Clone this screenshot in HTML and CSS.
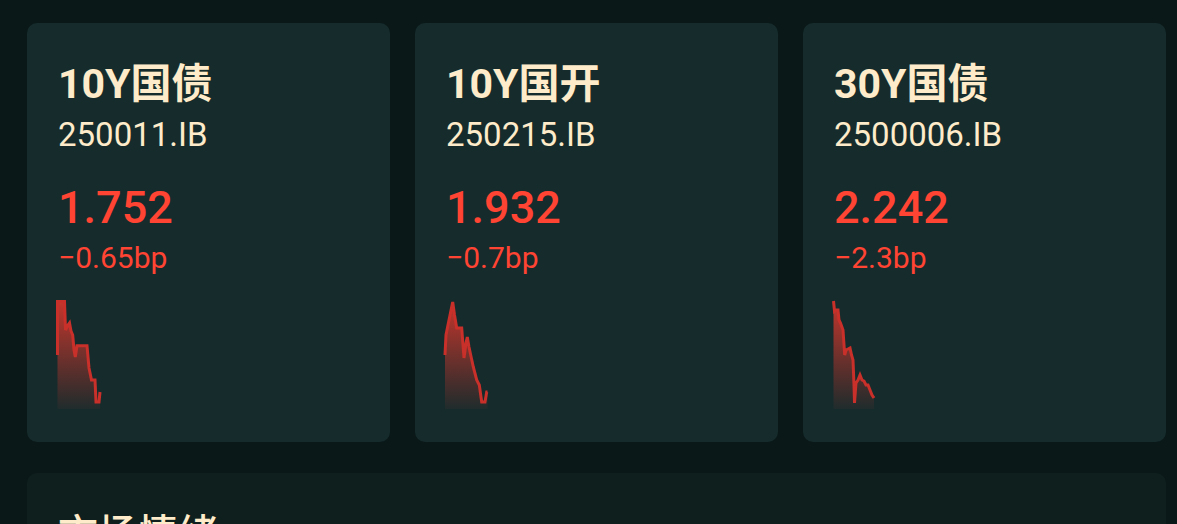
FILE: index.html
```html
<!DOCTYPE html>
<html lang="zh-CN">
<head>
<meta charset="utf-8">
<title>债券行情</title>
<link rel="stylesheet" href="styles.css">
</head>
<body>
<div class="page">
  <div class="cards">
    <div class="card">
      <div class="name">10Y国债</div>
      <div class="code">250011.IB</div>
      <div class="yield">1.752</div>
      <div class="change">−0.65bp</div>
      <svg class="spark" width="54" height="116" viewBox="0 0 54 116">
        <defs>
          <linearGradient id="g1" x1="0" y1="0" x2="0" y2="1">
            <stop offset="0" stop-color="#d8372c" stop-opacity="0.9"/>
            <stop offset="1" stop-color="#d8372c" stop-opacity="0.05"/>
          </linearGradient>
        </defs>
        <path d="M5.5 60 L5.5 6.5 L12.5 6.5 L13.5 35 L16 30 L17.5 28 L19 36 L20.7 40 L22 55 L23.3 62 L25 50.7 L35 50.7 L37 73 L39.5 85 L43 85 L44 107 L47 107 L48 97 L48 114 L5.5 114 Z" fill="url(#g1)"/>
        <path d="M5.5 60 L5.5 6.5 L12.5 6.5 L13.5 35 L16 30 L17.5 28 L19 36 L20.7 40 L22 55 L23.3 62 L25 50.7 L35 50.7 L37 73 L39.5 85 L43 85 L44 107 L47 107 L48 97" fill="none" stroke="#c9302a" stroke-width="3"/>
      </svg>
    </div>
    <div class="card">
      <div class="name">10Y国开</div>
      <div class="code">250215.IB</div>
      <div class="yield">1.932</div>
      <div class="change">−0.7bp</div>
      <svg class="spark" width="54" height="116" viewBox="0 0 54 116">
        <defs>
          <linearGradient id="g2" x1="0" y1="0" x2="0" y2="1">
            <stop offset="0" stop-color="#d8372c" stop-opacity="0.9"/>
            <stop offset="1" stop-color="#d8372c" stop-opacity="0.05"/>
          </linearGradient>
        </defs>
        <path d="M5 60 L6 40 L9 25 L12.7 7 L14.5 20 L16.7 33 L21.7 33 L23 50 L24 63 L26 48 L27.3 42 L29 52 L30.7 60 L33.3 72 L36.7 85 L39.3 90 L41.7 107 L45 107 L46.7 97 L47.5 97 L47.5 114 L5 114 Z" fill="url(#g2)"/>
        <path d="M5 60 L6 40 L9 25 L12.7 7 L14.5 20 L16.7 33 L21.7 33 L23 50 L24 63 L26 48 L27.3 42 L29 52 L30.7 60 L33.3 72 L36.7 85 L39.3 90 L41.7 107 L45 107 L46.7 97 L47.5 97" fill="none" stroke="#c9302a" stroke-width="3"/>
      </svg>
    </div>
    <div class="card">
      <div class="name">30Y国债</div>
      <div class="code">2500006.IB</div>
      <div class="yield">2.242</div>
      <div class="change">−2.3bp</div>
      <svg class="spark" width="54" height="116" viewBox="0 0 54 116">
        <defs>
          <linearGradient id="g3" x1="0" y1="0" x2="0" y2="1">
            <stop offset="0" stop-color="#d8372c" stop-opacity="0.9"/>
            <stop offset="1" stop-color="#d8372c" stop-opacity="0.05"/>
          </linearGradient>
        </defs>
        <path d="M5.5 6 L6.5 16 L7.5 15 L10 15 L11 25 L12.5 28 L15 35 L16.7 60 L18 55 L20 54 L22 53 L23.5 60 L25 65 L26 90 L26.5 108 L28 88 L30 85 L32 80 L34 85 L36 86 L38 90 L40 90 L42 95 L44 100 L46 103 L46 114 L5.5 114 Z" fill="url(#g3)"/>
        <path d="M5.5 6 L6.5 16 L7.5 15 L10 15 L11 25 L12.5 28 L15 35 L16.7 60 L18 55 L20 54 L22 53 L23.5 60 L25 65 L26 90 L26.5 108 L28 88 L30 85 L32 80 L34 85 L36 86 L38 90 L40 90 L42 95 L44 100 L46 103" fill="none" stroke="#c9302a" stroke-width="3"/>
      </svg>
    </div>
  </div>
  <div class="panel">
    <div class="panel-title">市场情绪</div>
  </div>
</div>
</body>
</html>
```
FILE: styles.css
```css
html, body {
  margin: 0;
  padding: 0;
  background: #0a1818;
  overflow: hidden;
  height: 524px;
}
body {
  font-family: Roboto, "Noto Sans CJK SC", sans-serif;
  color: #fdebc9;
}
.page {
  padding: 23px 11px 0 27px;
  display: flex;
  flex-direction: column;
  gap: 31px;
}
.cards {
  display: grid;
  grid-template-columns: repeat(3, 1fr);
  gap: 25px;
}
.card {
  background: #162b2c;
  border-radius: 10px;
  height: 419px;
  box-sizing: border-box;
  padding: 37px 32px 0 31px;
  display: flex;
  flex-direction: column;
}
.name {
  font-size: 41px;
  font-weight: 700;
  line-height: 48px;
}
.code {
  font-size: 33px;
  line-height: 44px;
  margin-top: 5px;
}
.yield {
  font-size: 45px;
  font-weight: 500;
  line-height: 56px;
  margin-top: 23px;
  color: #ff4433;
}
.change {
  font-size: 30px;
  line-height: 36px;
  margin-top: 4px;
  color: #ff4433;
}
.spark {
  display: block;
  margin-top: 19px;
  margin-left: -6px;
}
.panel {
  background: #0f1f1e;
  border-radius: 10px;
  height: 200px;
  padding: 34px 32px 34px 31px;
}
.panel-title {
  font-size: 40px;
  font-weight: 500;
  line-height: 56px;
}
```
